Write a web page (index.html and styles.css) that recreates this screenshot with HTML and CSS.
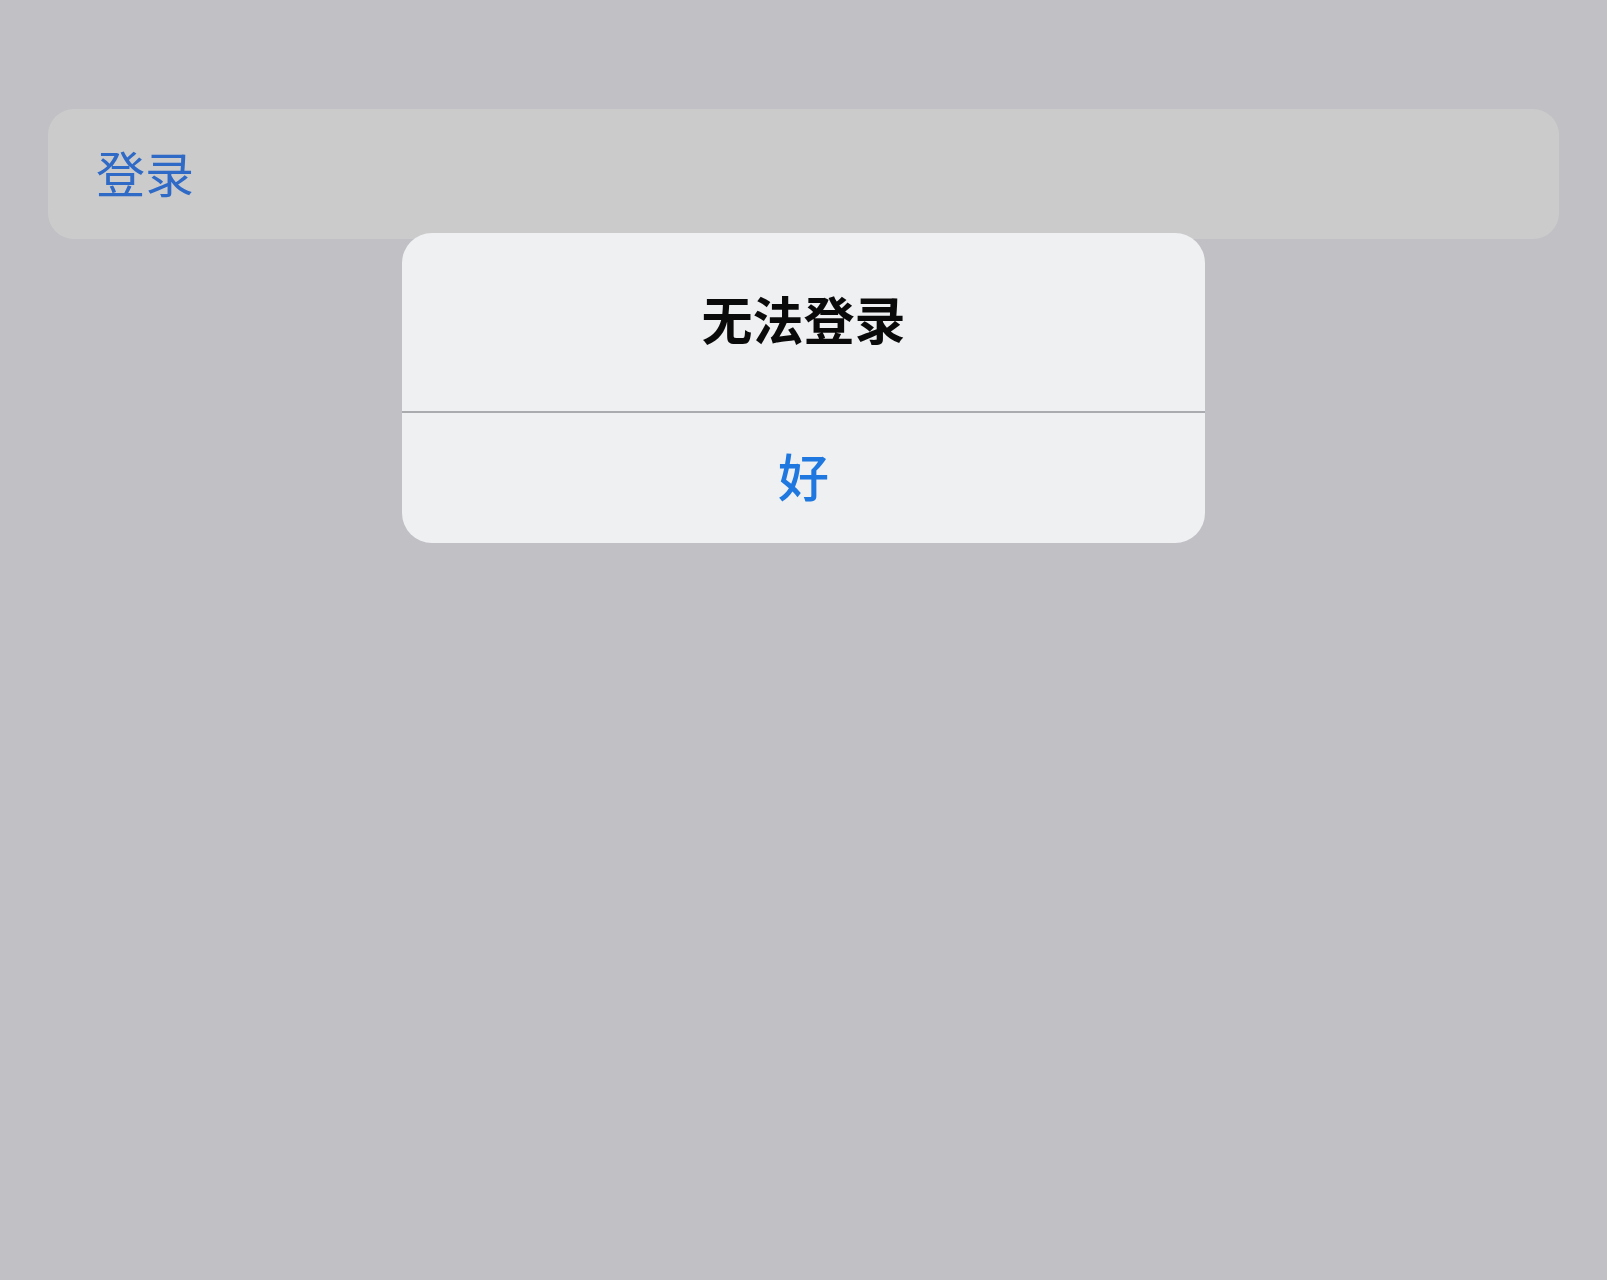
FILE: index.html
```html
<!DOCTYPE html>
<html lang="zh-CN">
<head>
<meta charset="utf-8">
<title>无法登录</title>
<link rel="stylesheet" href="styles.css">
</head>
<body>
<main class="screen">
  <div class="row-card">
    <span class="row-label">登录</span>
  </div>
  <div class="alert" role="alertdialog">
    <div class="alert-body">
      <h1 class="alert-title">无法登录</h1>
    </div>
    <div class="alert-divider"></div>
    <button class="alert-button" type="button">好</button>
  </div>
</main>
</body>
</html>
```

FILE: styles.css
```css
html, body {
  margin: 0;
  padding: 0;
  width: 1607px;
  height: 1280px;
  background: #c0c0c5;
  overflow: hidden;
}

.screen {
  position: relative;
  width: 1607px;
  height: 1280px;
  padding: 109px 48px 0 48px;
  box-sizing: border-box;
  font-family: "Noto Sans CJK SC", "Noto Sans", sans-serif;
}

.row-card {
  height: 130px;
  background: #cbcbcc;
  border-radius: 26px;
  display: flex;
  align-items: center;
  padding-left: 48px;
  padding-bottom: 6px;
  box-sizing: border-box;
}

.row-label {
  font-size: 49px;
  line-height: 1;
  color: #2f6ac6;
  font-weight: 400;
}

.alert {
  position: absolute;
  left: 402px;
  top: 233px;
  width: 803px;
  height: 310px;
  background: #eff0f2;
  border-radius: 30px;
  display: flex;
  flex-direction: column;
  overflow: hidden;
}

.alert-body {
  height: 178px;
  padding-bottom: 8px;
  box-sizing: border-box;
  display: flex;
  align-items: center;
  justify-content: center;
}

.alert-title {
  margin: 0;
  font-size: 51px;
  line-height: 1;
  font-weight: 700;
  color: #0a0a0a;
}

.alert-divider {
  height: 2px;
  background: #aaabaf;
}

.alert-button {
  flex: 1;
  border: 0;
  background: transparent;
  padding: 0 0 6px 0;
  font-family: "Noto Sans CJK SC", "Noto Sans", sans-serif;
  font-size: 51px;
  line-height: 1;
  font-weight: 500;
  color: #1f78e0;
  display: flex;
  align-items: center;
  justify-content: center;
}
```
